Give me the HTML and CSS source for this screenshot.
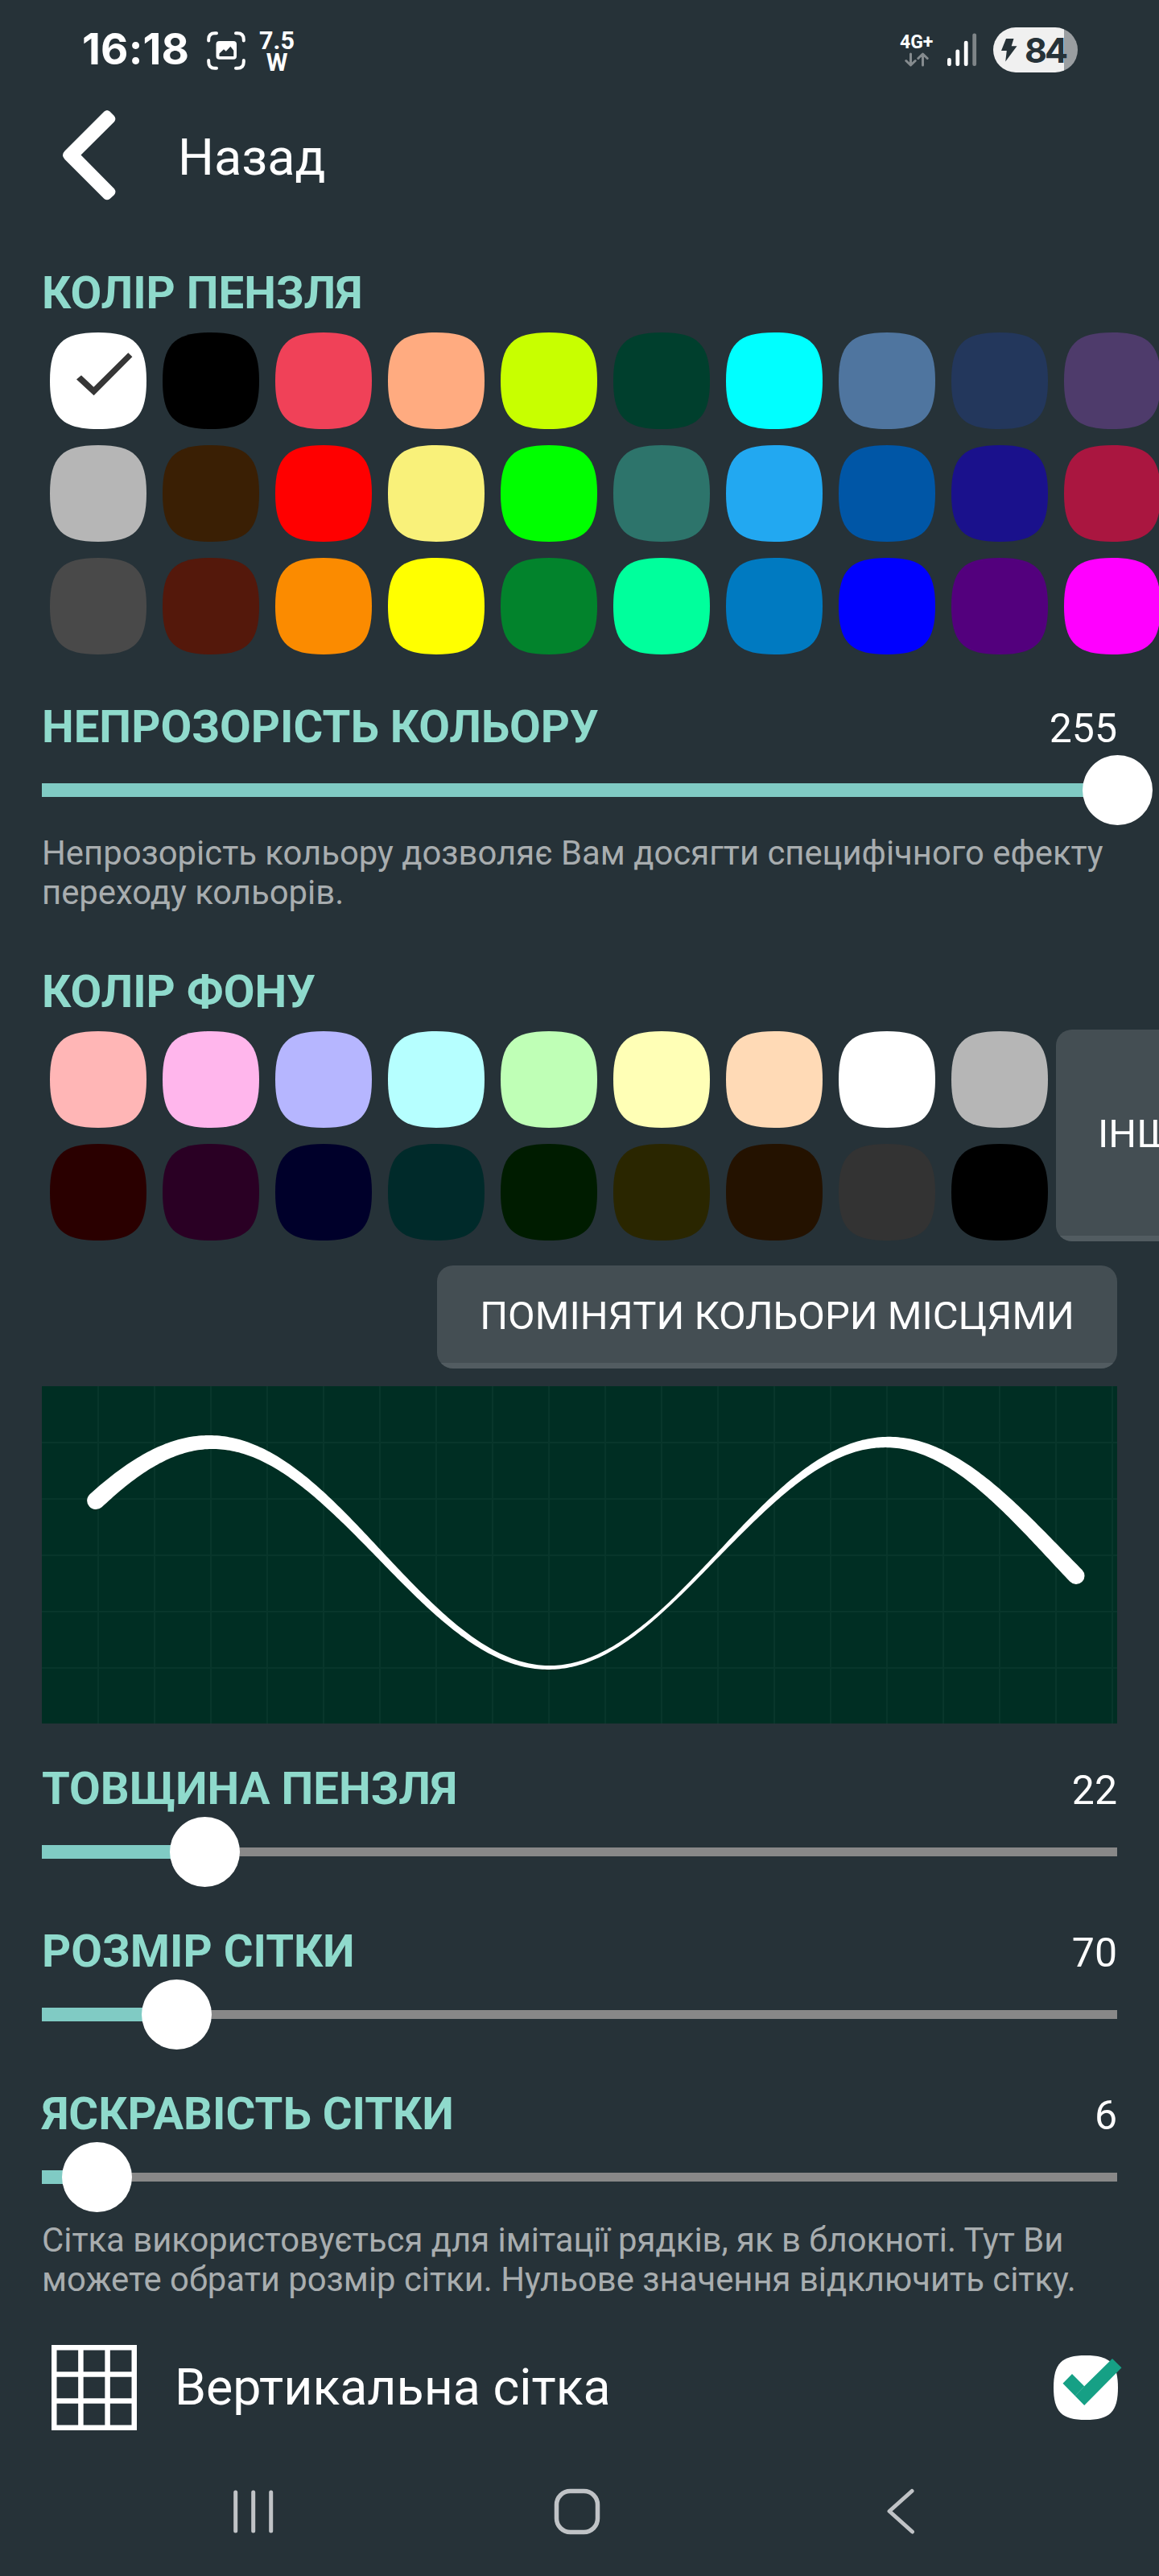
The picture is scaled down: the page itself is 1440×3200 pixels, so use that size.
FILE: index.html
```html
<!DOCTYPE html>
<html lang="uk">
<head>
<meta charset="utf-8">
<title>Назад</title>
<link rel="stylesheet" href="styles.css">
</head>
<body>
<div class="screen">
  <div class="status">
    <div class="status-left">
      <span class="clock">16:18</span>
      <svg class="shot" width="48" height="48" viewBox="0 0 48 48">
        <path d="M2.2 11.5V10Q2.2 2.2 10 2.2h2M36 2.2h2Q45.8 2.2 45.8 10v1.500M45.800 36v2Q45.800 45.800 38 45.800h-2M12 45.800h-2Q2.200 45.800 2.200 38v-2" fill="none" stroke="#fff" stroke-width="4" stroke-linecap="round"/>
        <rect x="11.500" y="12" width="25.500" height="22.700" rx="4" fill="#fff"/>
        <path d="M15.500 31v-3.500l5.500-5.200 2.800 2.500 5.500-6 4 5V31z" fill="#263238"/>
      </svg>
      <span class="watts"><span>7.5</span><span>W</span></span>
    </div>
    <div class="status-right">
      <div class="net">
        <span class="net-label">4G+</span>
        <svg width="30" height="18" viewBox="0 0 30 18" fill="none" stroke="#858b8e" stroke-width="3" stroke-linecap="round" stroke-linejoin="round"><path d="M7.500 2v13.500M1.800 10.500l5.700 5.500 5.700-5.500M22.500 16V2.500M16.800 7.500l5.700-5.500 5.700 5.500"/></svg>
      </div>
      <svg class="bars" width="37" height="42" viewBox="0 0 37 42"><rect y="31" width="4.800" height="10" rx="2.200" fill="#fff"/><rect x="10.400" y="20.500" width="4.800" height="20.500" rx="2.200" fill="#fff"/><rect x="20.800" y="9.700" width="4.800" height="31.300" rx="2.200" fill="#fff"/><rect x="31.300" y=".5" width="4.800" height="40.500" rx="2.200" fill="#7f8588"/></svg>
      <div class="battery">
        <svg width="20" height="29" viewBox="0 0 20 29"><path d="M6 0H15.500L12.700 9.300H19.500L5.200 28.500 6.800 15H0z" fill="#263238"/></svg>
        <span>84</span>
      </div>
    </div>
  </div>

  <header class="header">
    <svg width="70" height="116" viewBox="0 0 70 116"><path d="M54.500 3.500Q58 .5 61.500 3.500L66.500 8.500Q70 12.500 67 16.200L25.500 57.500 67 99.500Q70 103.500 66.500 107.500L61.500 112Q58 114.500 54.500 112L5.500 63Q.500 57.500 5.500 52.500z" fill="#fff"/></svg>
    <h1>Назад</h1>
  </header>

  <h2 class="title brush-title">КОЛІР ПЕНЗЛЯ</h2>
  <div class="palette" id="brush"></div>

  <div class="row opacity-row"><h2 class="title">НЕПРОЗОРІСТЬ КОЛЬОРУ</h2><span class="value">255</span></div>
  <div class="slider full"><i class="fill" style="width:1336px"></i><i class="thumb" style="left:1336px"></i></div>
  <p class="hint">Непрозорість кольору дозволяє Вам досягти специфічного ефекту переходу кольорів.</p>

  <h2 class="title back-title">КОЛІР ФОНУ</h2>
  <div class="back-row">
    <div class="palette back" id="back"></div>
    <button class="btn other">ІНШИЙ</button>
  </div>
  <div class="swap-row"><button class="btn">ПОМІНЯТИ КОЛЬОРИ МІСЦЯМИ</button></div>

  <svg class="preview" width="1336" height="419" viewBox="0 0 1336 419">
    <path id="lines" stroke="#08362b" stroke-width="2"/>
    <path id="curve" fill="#fff"/>
  </svg>

  <div class="row first"><h2 class="title">ТОВЩИНА ПЕНЗЛЯ</h2><span class="value">22</span></div>
  <div class="slider"><i class="fill" style="width:202px"></i><i class="thumb" style="left:202px"></i></div>
  <div class="row"><h2 class="title">РОЗМІР СІТКИ</h2><span class="value">70</span></div>
  <div class="slider"><i class="fill" style="width:167px"></i><i class="thumb" style="left:167px"></i></div>
  <div class="row"><h2 class="title">ЯСКРАВІСТЬ СІТКИ</h2><span class="value">6</span></div>
  <div class="slider"><i class="fill" style="width:68px"></i><i class="thumb" style="left:68px"></i></div>
  <p class="hint">Сітка використовується для імітації рядків, як в блокноті. Тут Ви можете обрати розмір сітки. Нульове значення відключить сітку.</p>

  <div class="option">
    <svg width="106" height="106" viewBox="0 0 106 106"><path d="M3.250 3.250h99.500v99.500h-99.500zM36.400 3v100M69.600 3v100M3 36.400h100M3 69.600h100" fill="none" stroke="#fff" stroke-width="6.500"/></svg>
    <span class="option-name">Вертикальна сітка</span>
    <svg class="check" width="80" height="80" viewBox="0 0 80 80"><path d="M40 0C70 0 80 10 80 40S70 80 40 80 0 70 0 40 10 0 40 0z" fill="#fff"/><path d="M11.500 34.700L23 23 38.200 38.300 73 4 84.500 15.300 38.200 62z" fill="#16a085"/><path d="M27 50L38.200 38.300" stroke="#4bb59f" stroke-width=".8"/></svg>
  </div>

  <nav class="nav">
    <svg class="recents" width="50" height="54" viewBox="0 0 50 54" stroke="#c0c3c6" stroke-width="5" stroke-linecap="round"><path d="M2.700 3v48M24.700 3v48M46.700 3v48"/></svg>
    <svg class="home" width="58" height="58" viewBox="0 0 58 58"><rect x="3.500" y="3.500" width="51" height="51" rx="17" fill="none" stroke="#c0c3c6" stroke-width="5.500"/></svg>
    <svg class="nav-back" width="36" height="58" viewBox="0 0 36 58" fill="none" stroke="#c0c3c6" stroke-width="5" stroke-linecap="round" stroke-linejoin="round"><path d="M32 3.500L4 28.500 32.500 54"/></svg>
  </nav>
</div>
<script src="app.js"></script>
</body>
</html>
```

FILE: styles.css
```css
* { box-sizing: border-box; margin: 0; padding: 0; }
body { background: #263238; font-family: Roboto, "Open Sans", sans-serif; color: #fff; }
.screen { width: 1440px; height: 3200px; overflow: hidden; padding: 0 52px; display: flex; flex-direction: column; }
svg { display: block; flex: none; }

.status { height: 128px; margin: 0 -52px; padding: 34px 101px 0 102px; display: flex; justify-content: space-between; flex: none; }
.status-left, .status-right { display: flex; align-items: flex-start; }
.clock { font: 700 53px/56px Inter, sans-serif; width: 155px; letter-spacing: .2px; margin-top: -1px; }
.shot { margin-top: 5px; }
.watts { font: 700 30.5px/26.5px Roboto, sans-serif; display: flex; flex-direction: column; align-items: center; width: 50px; margin: 4px 0 0 14px; }
.net { width: 59px; padding-top: 6px; }
.net-label { display: block; font: 700 23px/25px Roboto, sans-serif; }
.net svg { margin-left: 6px; }
.bars { margin: 7px 20px 0 0; }
.battery { width: 105px; height: 56px; border-radius: 28px; background: linear-gradient(90deg, #f0f0f0 88px, #9a9ea1 88px); display: flex; align-items: center; padding-left: 10px; gap: 9px; color: #263238; font: 700 43px/56px Inter, sans-serif; letter-spacing: -3px; }

.header { height: 130px; display: flex; align-items: center; padding-left: 23px; flex: none; }
.header h1 { font-weight: 400; font-size: 63px; line-height: 80px; margin: 5px 0 0 76px; }

.title { font-size: 56.25px; line-height: 66px; font-weight: 700; color: #8fdacc; }
.brush-title { margin-top: 73px; }
.palette { display: grid; grid-template-columns: repeat(10, 120px); gap: 20px; margin: 16px 0 0 10px; }
.palette.back { grid-template-columns: repeat(9, 120px); align-content: start; margin: 2px 10px 0 0; }
.row { display: flex; justify-content: space-between; margin-top: 47px; height: 66px; }
.opacity-row { margin-top: 57px; }
.row.first { margin-top: 48px; }
.value { font-size: 50px; line-height: 70px; }
.slider { position: relative; height: 87px; margin-top: 2px; flex: none; background: linear-gradient(#888, #888) 0 38px / 100% 11px no-repeat; }
.slider i { position: absolute; }
.fill { left: 0; top: 35px; height: 17px; background: #80cbc4; }
.thumb { top: 0; width: 87px; height: 87px; margin-left: -43.5px; border-radius: 50%; background: #fff; }
.hint { font-size: 41.83px; line-height: 49px; color: #a8adaf; margin-top: 10px; }
.back-title { margin-top: 66px; }
.back-row { display: flex; margin: 14px -52px 0 10px; height: 263px; flex: none; }
.btn { flex: none; border: 0; border-radius: 20px; height: 128px; padding: 0 53px 3px; color: #fff; font: 400 48.9px/60px Roboto, sans-serif; background: linear-gradient(#444e53 calc(100% - 7px), #525c61 0); }
.btn.other { height: 263px; padding-left: 52px; text-align: left; width: 260px; }
.swap-row { display: flex; justify-content: flex-end; margin-top: 30px; }
.preview { margin-top: 22px; background: #002e23; }

.option { display: flex; align-items: center; height: 106px; margin-top: 57px; padding-left: 12px; flex: none; }
.option-name { font-size: 62.7px; line-height: 80px; margin: 0 auto 0 47px; }
.check { overflow: visible; margin-right: -1px; }
.nav { display: flex; align-items: center; justify-content: space-between; height: 60px; margin: 71px 251px 0 238px; flex: none; }
.home { margin-left: -8px; }
```

FILE: app.js
```js
(() => {
  const BRUSH = [
    '#ffffff #000000 #f04158 #ffab80 #c8ff00 #003f2d #00ffff #4f759f #23375c #4e3b6b',
    '#b6b6b6 #3a1f04 #ff0000 #f9f17a #00ff00 #2d746b #22a8f1 #0056a6 #1a118c #aa1640',
    '#494949 #54180b #fb8b00 #ffff00 #02832c #00ff9c #007ac1 #0000ff #53007d #ff00ff'
  ];
  const BACK = [
    '#ffb6b6 #ffb6ec #b6b6ff #b6ffff #bfffb6 #ffffb6 #ffdab6 #ffffff #b6b6b6',
    '#2a0000 #2a0024 #00002a #002a2a #001c00 #2a2600 #241200 #333333 #000000'
  ];
  const SHAPE = 'M60 0C105 0 120 15 120 60S105 120 60 120 0 105 0 60 15 0 60 0z';
  const TICK = '<path d="M33 58.3L39 53.3 54.4 67.700 97.300 25.300 102.400 30.300 54.600 78.300z" fill="#363636"/>';

  function fillPalette(id, rows, selected) {
    document.getElementById(id).innerHTML = rows.join(' ').split(' ').map((c, i) =>
      `<svg width="120" height="120" viewBox="0 0 120 120"><path d="${SHAPE}" fill="${c}"/>${i === selected ? TICK : ''}</svg>`
    ).join('');
  }
  fillPalette('brush', BRUSH, 0);
  fillPalette('back', BACK, -1);

  let grid = '';
  for (let x = 70; x < 1336; x += 70) grid += `M${x} 0V419`;
  for (let y = 70; y < 419; y += 70) grid += `M0 ${y}H1336`;
  document.getElementById('lines').setAttribute('d', grid);

  // Brush width along the curve, as [x, width] stops
  const STOPS = [[67, 22], [210, 17], [421, 9.5], [630, 4.8], [780, 3.8], [838, 4.8], [1050, 13.3], [1285, 21]];
  function widthAt(x) {
    for (let i = 1; i < STOPS.length; i++) {
      const [x0, w0] = STOPS[i - 1], [x1, w1] = STOPS[i];
      if (x <= x1) return w0 + (w1 - w0) * (x - x0) / (x1 - x0);
    }
    return STOPS[STOPS.length - 1][1];
  }
  const K = 2 * Math.PI / 840;
  const upper = [], lower = [];
  for (let x = 67; x <= 1285; x += 3) {
    const y = 209.5 - 140 * Math.cos(K * (x - 210));
    const s = 140 * K * Math.sin(K * (x - 210));
    const n = Math.hypot(1, s), h = widthAt(x) / 2;
    upper.push(`${(x + s / n * h).toFixed(2)} ${(y - h / n).toFixed(2)}`);
    lower.unshift(`${(x - s / n * h).toFixed(2)} ${(y + h / n).toFixed(2)}`);
  }
  document.getElementById('curve').setAttribute('d',
    `M${upper.join('L')}A10.5 10.5 0 0 1 ${lower.join('L')}A11 11 0 0 1 ${upper[0]}z`);
})();
```
